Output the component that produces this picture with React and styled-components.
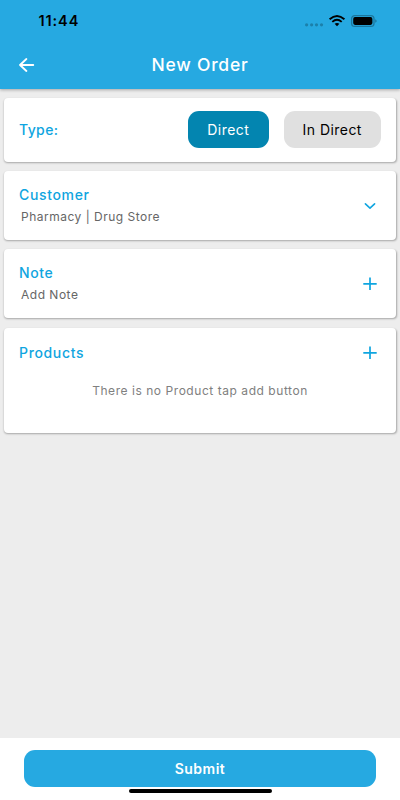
import { useState } from "react";
import styled, { createGlobalStyle } from "styled-components";

const App = () => {
    const [type, setType] = useState("direct");

    return(
        <>
            <GlobalStyle/>
            <Screen>
                <Header>
                    <StatusBar>
                        <Time>11:44</Time>
                        <StatusIcons/>
                    </StatusBar>
                    <NavBar>
                        <IconButton aria-label="back">
                            <svg width="16" height="14" viewBox="0 0 16 14" fill="none" stroke="#fff" strokeWidth="1.8" strokeLinecap="round" strokeLinejoin="round">
                                <path d="M14.3 7H1.2M7.4 1L1 7l6.4 6"/>
                            </svg>
                        </IconButton>
                        <Title>New Order</Title>
                        <Spacer/>
                    </NavBar>
                </Header>

                <Content>
                    <Card $height={64.5}>
                        <Label $spacing={0.4}>Type:</Label>
                        <TypeButtons>
                            <TypeButton $width={80.5} $active={type === "direct"} onClick={() => setType("direct")}>Direct</TypeButton>
                            <TypeButton $width={97.5} $active={type === "indirect"} onClick={() => setType("indirect")}>In Direct</TypeButton>
                        </TypeButtons>
                    </Card>

                    <Card $height={69}>
                        <TextGroup>
                            <Label>Customer</Label>
                            <SubText>Pharmacy | Drug Store</SubText>
                        </TextGroup>
                        <IconButton aria-label="select customer">
                            <svg width="14" height="14" viewBox="0 0 14 14" fill="none" stroke="#0FA5E0" strokeWidth="1.6" strokeLinecap="round" strokeLinejoin="round">
                                <path d="M2.4 4.9L7 9.2l4.6-4.3"/>
                            </svg>
                        </IconButton>
                    </Card>

                    <Card $height={69}>
                        <TextGroup>
                            <Label>Note</Label>
                            <SubText>Add Note</SubText>
                        </TextGroup>
                        <IconButton aria-label="add note">
                            <PlusIcon/>
                        </IconButton>
                    </Card>

                    <ProductCard $height={104.5}>
                        <ProductHeader>
                            <Label>Products</Label>
                            <IconButton aria-label="add product">
                                <PlusIcon/>
                            </IconButton>
                        </ProductHeader>
                        <EmptyText>There is no Product tap add button</EmptyText>
                    </ProductCard>
                </Content>

                <Footer>
                    <SubmitButton>Submit</SubmitButton>
                    <HomeIndicator/>
                </Footer>
            </Screen>
        </>
    );
};

const StatusIcons = () => (
    <svg width="74" height="14" viewBox="0 0 74 14" fill="none">
        <g fill="#1C80AA">
            <circle cx="3.6" cy="10.8" r="1.6"/>
            <circle cx="8.6" cy="10.8" r="1.6"/>
            <circle cx="13.5" cy="10.8" r="1.6"/>
            <circle cx="18.5" cy="10.8" r="1.6"/>
        </g>
        <g stroke="#000" strokeWidth="1.9">
            <path d="M26.6 5.2Q34 -1.4 41.4 5.2"/>
            <path d="M29.3 7.9Q34 3.8 38.7 7.9"/>
        </g>
        <path d="M31.6 9.8Q34 8 36.4 9.8L34 12.2Z" fill="#000"/>
        <rect x="48.6" y="1.6" width="22.4" height="10.8" rx="3.2" stroke="#1B779E" strokeWidth="1.3"/>
        <rect x="50.2" y="3.1" width="19.2" height="7.8" rx="1.8" fill="#000"/>
        <path d="M72.3 5.3Q73.6 5.8 73.6 7T72.3 8.7Z" fill="#1B6F93"/>
    </svg>
);

const PlusIcon = () => (
    <svg width="14" height="14" viewBox="0 0 14 14" fill="none" stroke="#0FA5E0" strokeWidth="1.7">
        <path d="M7 .6v12.4M.3 6.8h13.4"/>
    </svg>
);

export default App;

const GlobalStyle = createGlobalStyle`
    * {
        box-sizing: border-box;
    }

    body {
        margin: 0;
        font-family: Inter, "Liberation Sans", sans-serif;
    }

    button {
        padding: 0;
        border: none;
        background: none;
        font-family: inherit;
        cursor: pointer;
    }
`;

const Screen = styled.div`
    display: flex;
    flex-direction: column;
    width: 400px;
    height: 800px;
    background-color: #EDEDED;
    overflow: hidden;
`;

const Header = styled.header`
    height: 89px;
    background-color: #26A9E1;
    box-shadow: 0 1px 3px rgba(0, 0, 0, 0.3);
`;

const StatusBar = styled.div`
    display: flex;
    justify-content: space-between;
    align-items: center;
    height: 42px;
    padding: 0 23px 0 38.5px;
`;

const Time = styled.span`
    font-size: 14.5px;
    font-weight: 600;
    line-height: 16px;
    letter-spacing: 0.9px;
    margin-bottom: 1px;
`;

const NavBar = styled.div`
    display: flex;
    align-items: center;
    height: 46px;
    padding: 0 19px;
`;

const IconButton = styled.button`
    display: flex;
    align-items: center;
    width: 14px;
    height: 14px;

    > svg {
        flex-shrink: 0;
    }
`;

const Title = styled.h1`
    flex: 1 1 0;
    margin: 0;
    color: #fff;
    font-size: 17.5px;
    font-weight: 500;
    line-height: 22px;
    letter-spacing: 0.75px;
    text-align: center;
    margin-bottom: 1px;
`;

const Spacer = styled.div`
    width: 14px;
`;

const Content = styled.main`
    display: flex;
    flex: 1 1 0;
    flex-direction: column;
    gap: 9px;
    padding: 8.5px 4px 0;
`;

const Card = styled.section`
    display: flex;
    justify-content: space-between;
    align-items: center;
    height: ${({ $height }) => $height}px;
    padding: 0 19px 0 15px;
    border-radius: 4px;
    background-color: #fff;
    box-shadow: 0.5px 1px 2px rgba(0, 0, 0, 0.3);
`;

const ProductCard = styled(Card)`
    flex-direction: column;
    align-items: stretch;
    justify-content: flex-start;
    margin-top: 1px;
    padding-top: 16px;
`;

const ProductHeader = styled.div`
    display: flex;
    justify-content: space-between;
    align-items: center;
`;

const Label = styled.h2`
    margin: 0;
    color: #0FA5E0;
    font-size: 14px;
    font-weight: 500;
    line-height: 18px;
    letter-spacing: ${({ $spacing = 0.65 }) => $spacing}px;
`;

const TextGroup = styled.div`
    display: flex;
    flex-direction: column;
    gap: 5px;
`;

const SubText = styled.p`
    margin: 0 0 0 2px;
    color: #666;
    font-size: 12px;
    line-height: 16px;
    letter-spacing: 0.5px;
`;

const EmptyText = styled.p`
    margin: 21px 0 0 4px;
    color: #808080;
    font-size: 12px;
    line-height: 16px;
    letter-spacing: 0.55px;
    text-align: center;
`;

const TypeButtons = styled.div`
    display: flex;
    gap: 15px;
    margin-right: -4px;
`;

const TypeButton = styled.button`
    width: ${({ $width }) => $width}px;
    height: 37px;
    border-radius: 11px;
    background-color: ${({ $active }) => ($active ? "#0385B0" : "#E0E0E0")};
    color: ${({ $active }) => ($active ? "#fff" : "#000")};
    font-size: 14px;
    letter-spacing: 0.45px;
`;

const Footer = styled.footer`
    display: flex;
    flex-direction: column;
    align-items: center;
    height: 62px;
    padding: 12.4px 24px 0;
    background-color: #fff;
`;

const SubmitButton = styled.button`
    width: 352px;
    height: 37px;
    border-radius: 11px;
    background-color: #26A9E1;
    color: #fff;
    font-size: 14px;
    font-weight: 600;
    letter-spacing: 0.5px;
`;

const HomeIndicator = styled.div`
    width: 143px;
    height: 4px;
    margin-top: 1.5px;
    border-radius: 2px;
    background-color: #000;
`;
